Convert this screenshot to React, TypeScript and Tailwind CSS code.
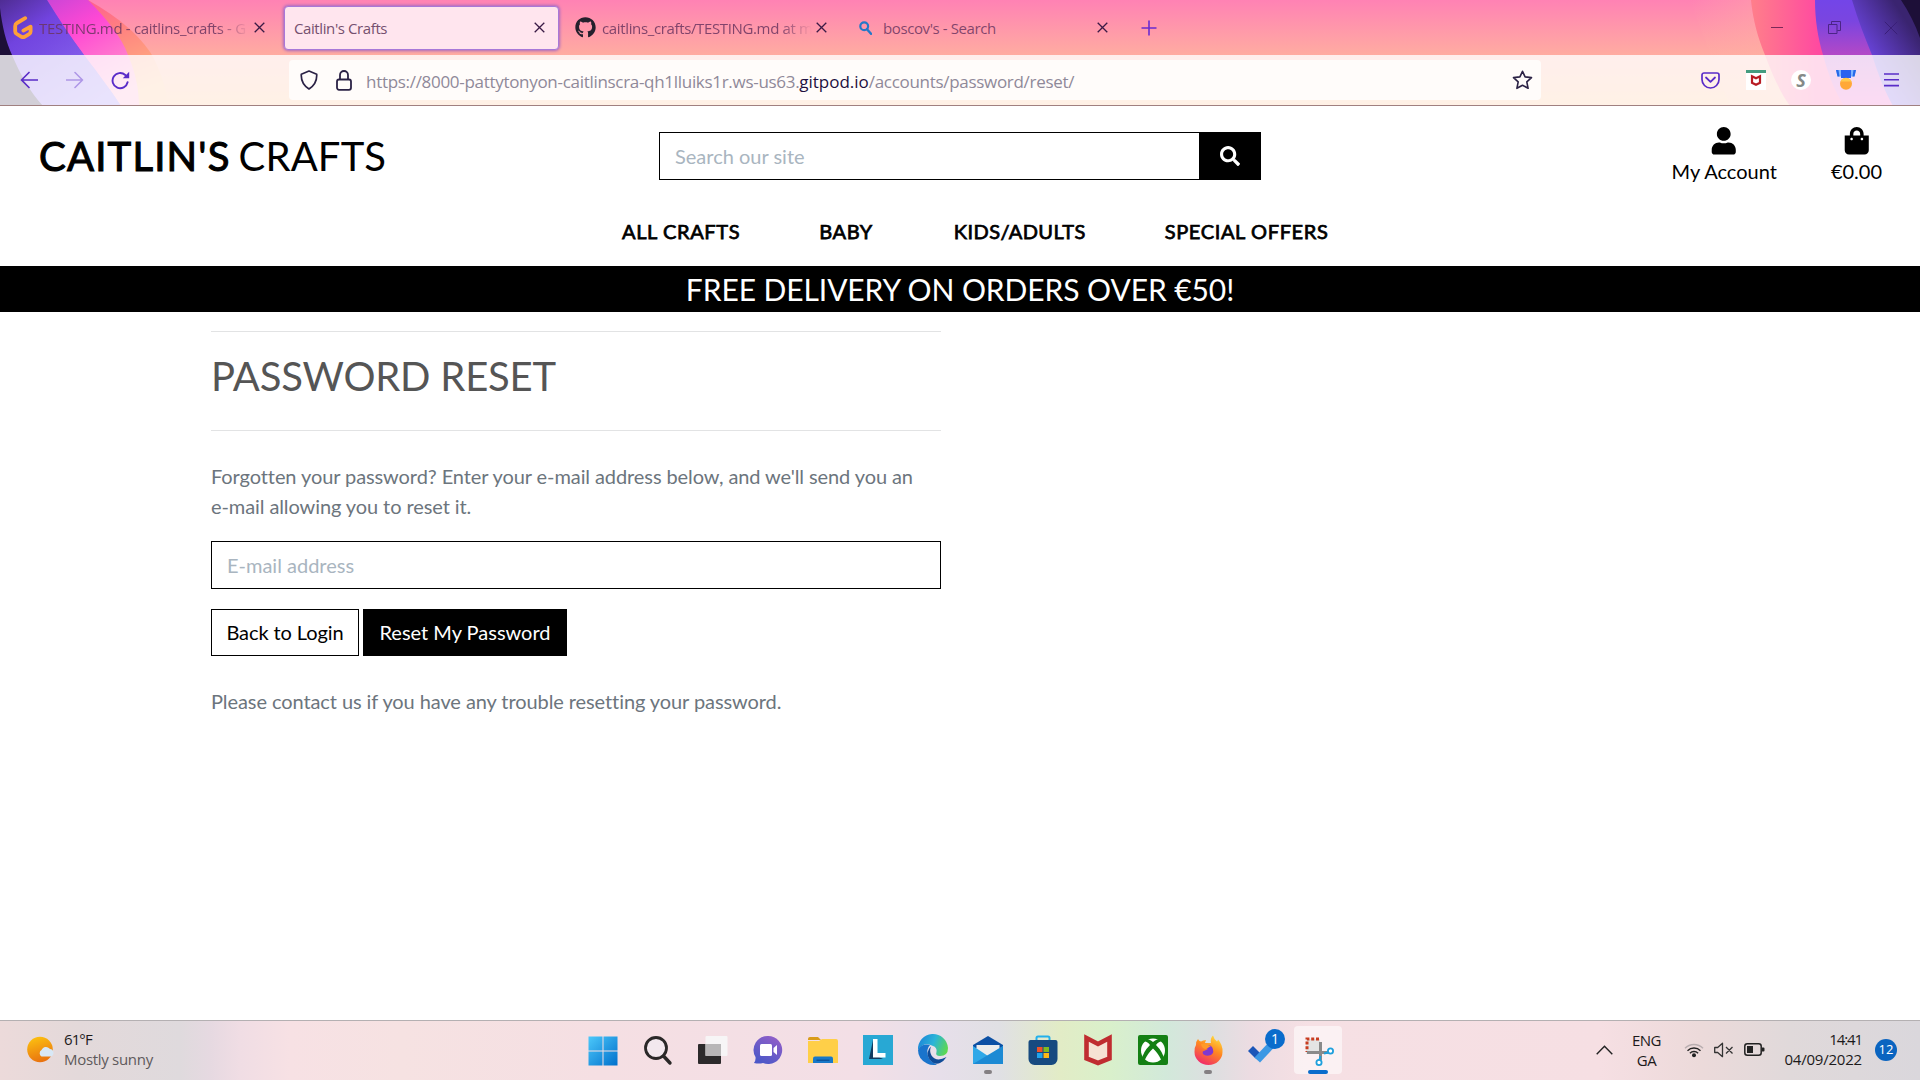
import type { ReactNode } from "react";
import { FaGithub, FaSearch, FaShoppingBag, FaUser } from "react-icons/fa";

function ThemeArt() {
  return (
    <svg className="absolute inset-0" width="1920" height="106" viewBox="0 0 1920 106">
      <defs>
        <linearGradient id="sky" x1="0" y1="0" x2="0" y2="1">
          <stop offset="0" stopColor="#ff82b4" />
          <stop offset="0.52" stopColor="#ffaca1" />
          <stop offset="1" stopColor="#ffba80" />
        </linearGradient>
        <linearGradient id="peach" x1="0" y1="0" x2="0.6" y2="1">
          <stop offset="0" stopColor="#ff3fa0" />
          <stop offset="0.5" stopColor="#ff8080" />
          <stop offset="1" stopColor="#ffb880" />
        </linearGradient>
        <linearGradient id="magenta" x1="0" y1="0" x2="0.7" y2="1">
          <stop offset="0" stopColor="#b043d8" />
          <stop offset="0.45" stopColor="#ff48d4" />
          <stop offset="1" stopColor="#ff9fc8" />
        </linearGradient>
        <linearGradient id="violet" x1="0" y1="0" x2="0.8" y2="1">
          <stop offset="0" stopColor="#3b2277" />
          <stop offset="0.3" stopColor="#6d42dc" />
          <stop offset="1" stopColor="#9a7bf5" />
        </linearGradient>
        <linearGradient id="violetStripe" x1="0" y1="0" x2="0.5" y2="1">
          <stop offset="0" stopColor="#8a4be8" />
          <stop offset="0.5" stopColor="#7846e8" />
          <stop offset="1" stopColor="#7b5cf0" />
        </linearGradient>
        <linearGradient id="rPeach" x1="0" y1="0" x2="1" y2="0">
          <stop offset="0" stopColor="#ff7f8a" />
          <stop offset="0.4" stopColor="#ff4aa0" />
          <stop offset="1" stopColor="#ff4aa0" />
        </linearGradient>
        <linearGradient id="rViolet" x1="0" y1="0" x2="0" y2="1">
          <stop offset="0" stopColor="#7345e8" />
          <stop offset="0.2" stopColor="#7a45e0" />
          <stop offset="0.5" stopColor="#b048c8" />
          <stop offset="1" stopColor="#f04cc0" />
        </linearGradient>
        <linearGradient id="rIndigo" x1="0" y1="1" x2="0.8" y2="0.2">
          <stop offset="0" stopColor="#7f5cff" />
          <stop offset="0.45" stopColor="#6a44dc" />
          <stop offset="1" stopColor="#3a2470" />
        </linearGradient>
        <linearGradient id="fadeIn" x1="0" y1="0" x2="1" y2="0">
          <stop offset="0" stopColor="#ffb0a8" stopOpacity="0" />
          <stop offset="1" stopColor="#ffb0a0" stopOpacity="0.6" />
        </linearGradient>
      </defs>
      <rect width="1920" height="106" fill="url(#sky)" />
      <path d="M0 0H88C120 18 140 36 152 55C162 74 166 90 168 106H0Z" fill="url(#peach)" />
      <path d="M0 0H88C108 20 122 38 128 55C136 74 139 90 139 106H0Z" fill="url(#magenta)" />
      <path d="M0 0H47C58 18 70 36 84 55C100 76 112 92 121 106H0Z" fill="url(#violetStripe)" />
      <path d="M0 0H47C58 18 70 36 84 55C100 76 112 92 121 106H0Z" fill="url(#violet)" opacity="0.75" />
      <path d="M0 8C2 26 6 42 12 55C20 74 30 92 43 106H0Z" fill="#1d0f38" />
      <path d="M1690 0H1751C1753 20 1758 38 1765 55C1772 74 1780 92 1790 106H1730Z" fill="url(#fadeIn)" />
      <path d="M1751 0C1753 20 1758 38 1765 55C1772 74 1780 92 1790 106H1920V0Z" fill="url(#rPeach)" />
      <path d="M1815 0C1815 20 1818 38 1823 55C1828 74 1835 92 1844 106H1920V0Z" fill="url(#rViolet)" />
      <path d="M1852 0C1858 20 1865 38 1872 55C1878 74 1885 92 1893 106H1920V0Z" fill="url(#rIndigo)" />
      <path d="M1901 0C1909 12 1915 24 1920 38V0Z" fill="#1d0f38" />
    </svg>
  );
}

function Close({ className = "" }: { className?: string }) {
  return (
    <svg width="11" height="11" viewBox="0 0 11 11" className={"shrink-0 " + className}>
      <path d="M.7.7l9.6 9.6M10.3.7L.7 10.3" stroke="#3a1a45" strokeWidth="1.3" fill="none" />
    </svg>
  );
}

function TabStrip() {
  return (
    <div className="relative flex h-[55px] items-center text-[15px] tracking-[-0.4px] text-[#6b3560]/85">
      <div className="flex w-[284px] items-center pl-[13px]">
        <svg width="20" height="24" viewBox="0 0 20 24" className="shrink-0">
          <path d="M12.2 2.2L4 7Q2.2 8.1 2.2 10V15.2Q2.2 17 3.8 18L8.5 20.8Q10 21.6 11.5 20.8L16 18.2Q17.6 17.2 17.6 15.4V10.6L10.4 14.6" fill="none" stroke="#ffa038" strokeWidth="3.8" strokeLinecap="round" strokeLinejoin="round" />
        </svg>
        <div className="ml-[6px] w-[210px] whitespace-nowrap pt-px tracking-[-0.32px] [mask-image:linear-gradient(to_right,black_85%,transparent)]">
          TESTING.md - caitlins_crafts - G
        </div>
        <Close className="ml-[5px]" />
      </div>
      <div className="flex h-[44px] w-[275px] items-center justify-between rounded-[4px] border border-[#a878d8] bg-[#ffe5ee] pl-[9px] pr-[13px] text-[#75506f] shadow-[0_0_3px_1px_#a86ac0]">
        <span className="pt-px">Caitlin's Crafts</span>
        <Close />
      </div>
      <div className="flex w-[284px] items-center pl-[16px]">
        <FaGithub size={21} color="#24202c" className="shrink-0" />
        <div className="ml-[6px] w-[210px] whitespace-nowrap pt-px tracking-[-0.36px] [mask-image:linear-gradient(to_right,black_85%,transparent)]">
          caitlins_crafts/TESTING.md at m
        </div>
        <Close className="ml-[4px]" />
      </div>
      <div className="flex w-[265px] items-center pl-[16px]">
        <svg width="13" height="14" viewBox="0 0 13 14" className="shrink-0">
          <circle cx="5.2" cy="5.2" r="3.9" fill="none" stroke="#2478c8" strokeWidth="2.2" />
          <path d="M8 8.2l4 4.6" stroke="#2478c8" strokeWidth="2.4" strokeLinecap="round" />
        </svg>
        <span className="ml-[11px] grow pt-px">boscov's - Search</span>
        <Close />
      </div>
      <svg width="16" height="16" viewBox="0 0 16 16" className="ml-[33px]">
        <path d="M8 .5v15M.5 8h15" stroke="#6a2bd0" strokeWidth="1.6" />
      </svg>
      <div className="ml-auto flex items-center pr-[22px]">
        <svg width="12" height="14" viewBox="0 0 12 14">
          <path d="M0 6.5h12" stroke="#7c2858" strokeWidth="1" />
        </svg>
        <svg width="13" height="13" viewBox="0 0 13 13" className="ml-[45px]">
          <path d="M.5 3.5h8.500v9H.5zM3.500 3.200V.5h9v9H9.300" fill="none" stroke="#4b2486" strokeWidth="1" />
        </svg>
        <svg width="14" height="14" viewBox="0 0 14 14" className="ml-[43px]">
          <path d="M.8.8l12.400 12.400M13.200.8L.8 13.200" stroke="#3a1f78" strokeWidth="1" />
        </svg>
      </div>
    </div>
  );
}

function Toolbar() {
  return (
    <div className="relative flex h-[51px] items-center border-b border-[#a08080] bg-white/80">
      <svg width="18" height="18" viewBox="0 0 18 18" className="ml-[20px]">
        <path d="M17.500 9H1.500M9 1.500L1.500 9L9 16.500" fill="none" stroke="#5a2cc8" strokeWidth="1.700" strokeLinejoin="round" strokeLinecap="round" />
      </svg>
      <svg width="18" height="18" viewBox="0 0 18 18" className="ml-[28px] opacity-40">
        <path d="M.5 9h16M9 1.500L16.500 9L9 16.500" fill="none" stroke="#5a2cc8" strokeWidth="1.600" strokeLinejoin="round" strokeLinecap="round" />
      </svg>
      <svg width="19" height="19" viewBox="0 0 19 19" className="ml-[27px]">
        <path d="M16.600 11.200A7.600 7.600 0 1 1 14.300 4" fill="none" stroke="#5a2cc8" strokeWidth="1.900" strokeLinecap="round" />
        <path d="M18.200.8v6.400h-6.400z" fill="#5a2cc8" />
      </svg>
      <div className="ml-[159px] flex h-[40px] w-[1252px] items-center rounded-[4px] bg-[#fffcfa] pr-[8px]">
        <svg width="18" height="20" viewBox="0 0 18 20" className="ml-[11px]">
          <path d="M9 1L16.700 4.200Q17.300 13.500 9 19Q.7 13.500 1.300 4.200Z" fill="none" stroke="#2b2245" strokeWidth="1.700" strokeLinejoin="round" />
        </svg>
        <svg width="16" height="21" viewBox="0 0 16 21" className="ml-[18px]">
          <rect x="1" y="9.500" width="14" height="10.300" rx="2" fill="none" stroke="#2b2245" strokeWidth="1.800" />
          <path d="M4 9.500V5a4 4 0 0 1 8 0v4.500" fill="none" stroke="#2b2245" strokeWidth="1.800" />
        </svg>
        <span className="ml-[14px] whitespace-pre pt-[3px] text-[17px] text-[#8f8999] tracking-[-0.3px]">
          https://8000-pattytonyon-caitlinscra-qh1lluiks1r.ws-us63.<span className="tracking-[-0.02px] text-[#1d1040]">gitpod.io</span>/accounts/password/reset/
        </span>
        <svg width="21" height="20" viewBox="0 0 21 20" className="ml-auto">
          <path d="M10.500 1.300L13.100 6.900L19.500 7.600L14.800 11.900L16.100 18.300L10.500 15.200L4.900 18.300L6.200 11.900L1.500 7.600L7.900 6.900Z" fill="none" stroke="#2b2245" strokeWidth="1.600" strokeLinejoin="round" />
        </svg>
      </div>
      <svg width="19" height="17" viewBox="0 0 19 17" className="ml-[160px]">
        <path d="M3 1h13a2 2 0 0 1 2 2v4.500a8.500 8.500 0 0 1-17 0V3a2 2 0 0 1 2-2z" fill="none" stroke="#5a2cc8" strokeWidth="1.700" />
        <path d="M5 5.500l4.500 4.300L14 5.500" fill="none" stroke="#5a2cc8" strokeWidth="1.800" strokeLinecap="round" strokeLinejoin="round" />
      </svg>
      <svg width="20" height="20" viewBox="0 0 20 20" className="ml-[26px]">
        <path d="M0 0h20v20H0z" fill="#fff" />
        <path d="M0 0h20v3H0z" fill="#459c80" />
        <path d="M6 6.300l4 2 4-2v6.500l-4 2-4-2z" fill="none" stroke="#b81c24" strokeWidth="2.200" />
      </svg>
      <div className="ml-[25px] flex size-[20px] items-center justify-center rounded-full bg-white text-[18px] leading-[20px] font-bold italic text-[#858a88]">S</div>
      <svg width="20" height="20" viewBox="0 0 20 20" className="ml-[25px]">
        <path d="M0 0h20l-1.500 6.500h-17z" fill="#7db4ff" />
        <path d="M0 0h2.500l1 6.500H1.500zM20 0h-2.500l-1 6.500h2z" fill="#2568e8" />
        <path d="M5 0h10v8H5z" fill="#2a62f0" />
        <circle cx="10" cy="13.700" r="6" fill="#ffa838" />
        <path d="M4.500 11.500a6 6 0 0 1 11 0z" fill="#ffcb50" />
      </svg>
      <svg width="15" height="14" viewBox="0 0 15 14" className="ml-[28px]">
        <path d="M0 1h15M0 6.800h15M0 12.600h15" stroke="#5a2cc8" strokeWidth="1.600" />
      </svg>
    </div>
  );
}

function SiteHeader() {
  return (
    <header className="h-[160px]">
      <div className="flex h-[92px] items-start pl-[39px] pr-[38px]">
        <div className="flex w-[620px] pt-[26px] text-[40px] leading-[48px]">
          <span className="tracking-[1.2px] [-webkit-text-stroke:1.1px_black]">CAITLIN'S</span>
          <span className="ml-[8px] tracking-[0.15px]">CRAFTS</span>
        </div>
        <div className="mt-[26px] flex h-[48px] w-[602px]">
          <div className="w-[540px] border border-r-0 border-black pl-[15px] leading-[47px] text-[#a9b5c0]">Search our site</div>
          <div className="flex w-[62px] items-center justify-center bg-black">
            <FaSearch size={20} color="white" />
          </div>
        </div>
        <div className="ml-auto flex pt-[21px]">
          <div className="flex flex-col items-center">
            <FaUser size={27.5} />
            <span className="mt-[1.500px] leading-[30px]">My Account</span>
          </div>
          <div className="ml-[54px] flex flex-col items-center">
            <FaShoppingBag size={27.5} />
            <span className="mt-[1.500px] leading-[30px]">€0.00</span>
          </div>
        </div>
      </div>
      <nav className="flex gap-[79px] pl-[622px] pt-[18px] leading-[30px] tracking-[0.62px] [-webkit-text-stroke:0.75px_black]">
        <span>ALL CRAFTS</span>
        <span>BABY</span>
        <span className="ml-[2px] tracking-[0.42px]">KIDS/ADULTS</span>
        <span>SPECIAL OFFERS</span>
      </nav>
    </header>
  );
}

function Page() {
  return (
    <main className="h-[914px] bg-white font-['Lato',sans-serif] text-[20px] text-black">
      <SiteHeader />
      <div className="h-[46px] bg-black pt-[5px] text-center text-[30px] leading-[36px] tracking-[-0.08px] text-white">FREE DELIVERY ON ORDERS OVER €50!</div>
      <section className="ml-[211px] w-[730px] text-[#6c757d]">
        <hr className="mt-[19px] border-t border-[#e2e3e4]" />
        <h2 className="mt-[20px] text-[40px] leading-[48px] tracking-[-0.2px] text-[#555]">PASSWORD RESET</h2>
        <hr className="mt-[30px] border-t border-[#e2e3e4]" />
        <p className="mt-[30px] leading-[30px] tracking-[-0.09px]">
          Forgotten your password? Enter your e-mail address below, and we'll send you an
          <br />
          e-mail allowing you to reset it.
        </p>
        <div className="mt-[20px] h-[48px] border border-black pl-[15px] leading-[47px] text-[#a9b5c0]">E-mail address</div>
        <div className="mt-[20px] flex gap-[4px] leading-[45px]">
          <div className="h-[47px] w-[148px] border border-black text-center tracking-[-0.09px] text-black">Back to Login</div>
          <div className="h-[47px] w-[204px] border border-black bg-black text-center text-white">Reset My Password</div>
        </div>
        <p className="mt-[30px] leading-[30px] tracking-[-0.085px]">Please contact us if you have any trouble resetting your password.</p>
      </section>
    </main>
  );
}

const taskIcons: ReactNode[] = [
  <>
    <defs>
      <linearGradient id="win" x1="0" y1="0" x2="1" y2="1">
        <stop offset="0" stopColor="#4cc8fa" />
        <stop offset="1" stopColor="#0070cc" />
      </linearGradient>
    </defs>
    <path d="M.5 1.500h14v14H.5zM15.500 1.500h14v14h-14zM.5 16.500h14v14H.5zM15.500 16.500h14v14h-14z" fill="url(#win)" />
  </>,
  <>
    <circle cx="13" cy="13" r="10.500" fill="#f2e8ee" stroke="#2a2828" strokeWidth="2.800" />
    <path d="M20.500 21l6.500 7" stroke="#2a2828" strokeWidth="3.400" strokeLinecap="round" />
  </>,
  <>
    <rect x="0" y="9" width="23" height="20" rx="1" fill="#2c2a2b" />
    <rect x="7.500" y="1" width="22" height="20" rx="1" fill="#f7f7f7" fillOpacity="0.9" />
    <path d="M7.500 9H23v12H7.500z" fill="#b8b6b7" />
  </>,
  <>
    <defs>
      <linearGradient id="chat" x1="1" y1="0" x2="0.4" y2="1">
        <stop offset="0" stopColor="#9a60c8" />
        <stop offset="1" stopColor="#4d58c8" />
      </linearGradient>
    </defs>
    <path d="M15 1a14 14 0 1 1-5 27q-4 1-9 0q2-3 1.500-6A14 14 0 0 1 15 1z" fill="url(#chat)" />
    <rect x="7" y="9" width="12" height="12" rx="1.500" fill="#fff" />
    <path d="M20.500 13l3.500-3v10l-3.500-3z" fill="#fff" />
  </>,
  <>
    <path d="M0 4a2 2 0 0 1 2-2h8l3 3H0z" fill="#d99c1a" />
    <path d="M0 6h11l3-2h14a2 2 0 0 1 2 2v22H0z" fill="#ffcf48" />
    <path d="M5 28v-4.500a2 2 0 0 1 2-2h16a2 2 0 0 1 2 2V28z" fill="#1878c8" />
    <path d="M8.500 24.500h13v1.500h-13z" fill="#0c549c" />
  </>,
  <>
    <path d="M0 0h30v30H0z" fill="#28a8d4" />
    <path d="M10 5L6 24h14l-8-4z" fill="#123c60" />
    <path d="M10 4h4.500v14h8v4.500H10z" fill="#fff" />
  </>,
  <>
    <defs>
      <linearGradient id="edgeTop" x1="0" y1="0.3" x2="1" y2="0.6">
        <stop offset="0" stopColor="#1c86d8" />
        <stop offset="0.5" stopColor="#2cb4d8" />
        <stop offset="1" stopColor="#5cd850" />
      </linearGradient>
    </defs>
    <path d="M0 15A15 15 0 0 1 30 13q0 8-8 8-5 0-3.500-4a5 5 0 0 0-3.500-6Q6 6 0 15z" fill="url(#edgeTop)" />
    <path d="M0 15q4-7 12-5Q8 14 10 21q2 6 9 8.500Q14 31 9 28.500 0 24 0 15z" fill="#1a74cc" />
    <path d="M13 11.500Q7 17 11.500 24.500q5 6 10.500 3.500 4-2 6.500-6-10 5.500-15-1.500-2.500-4-.5-9z" fill="#104c98" />
  </>,
  <>
    <path d="M0 10L15 1l15 9v3H0z" fill="#0c50a4" />
    <path d="M3.500 10h23v8L15 21 3.500 18z" fill="#ececec" />
    <path d="M0 11l15 10 15-10v18H0z" fill="#2fa8e8" />
    <path d="M0 29l30-18v18z" fill="#1c8ad4" />
  </>,
  <>
    <path d="M8.500 6V3a1.500 1.500 0 0 1 1.500-1.500h10A1.500 1.500 0 0 1 21.500 3v3" fill="none" stroke="#22b0ec" strokeWidth="2" />
    <path d="M.5 7q0-2 2-2h25q2 0 2 2v17a6 6 0 0 1-6 6h-17a6 6 0 0 1-6-6z" fill="#174a80" />
    <path d="M9 12h5.500v5H9z" fill="#f05228" />
    <path d="M15.500 12H21v5h-5.500z" fill="#80ba20" />
    <path d="M9 18h5.500v5H9z" fill="#20a4ec" />
    <path d="M15.500 18H21v5h-5.500z" fill="#fcb818" />
  </>,
  <path d="M3.500 3L15 9l11.500-6v20.500L15 28 3.500 23.500z" fill="#f6e2d4" stroke="#c02c30" strokeWidth="4.600" />,
  <>
    <rect width="30" height="30" rx="2" fill="#148014" />
    <circle cx="15" cy="15.500" r="12" fill="#fff" />
    <path d="M6 3.500q5 0 9 3.500 4-3.500 9-3.500l1.500 3q-4-1-7.500 3.500Q25 17 26 24l-2.500 1.500Q20 18 15 13.500 10 18 6.500 25.500L4 24Q5 17 12 10 8.500 5.500 4.500 6.500z" fill="#148014" />
  </>,
  <>
    <defs>
      <linearGradient id="fox" x1="0.8" y1="0" x2="0.3" y2="1">
        <stop offset="0" stopColor="#ffe040" />
        <stop offset="0.45" stopColor="#ff8a20" />
        <stop offset="1" stopColor="#f0286c" />
      </linearGradient>
    </defs>
    <path d="M3 10q0-4 2-6 1 2 3 2.500 2-1.500 5-1.500l-1 3h6Q17 3 20 .5q1 4 4 6 1-1 1-2Q30 10 29.500 17A14 13 0 0 1 1.500 17Q1 13 3 10z" fill="url(#fox)" />
    <path d="M11 12q5-4 8 0 3 5-1 8-5 2-8-1-1-3 1-3l4-2z" fill="#8038d0" />
    <path d="M8 9q4-1 7 1l3 1-5 3q-4 0-5-5z" fill="#ff9a28" />
  </>,
  <>
    <path d="M0 16l5-5 7.500 7.500-5 5z" fill="#1c56b8" />
    <path d="M6.500 22.500L22 6l5.500 5L12 27.500z" fill="#3c98e4" />
  </>,
  <>
    <rect x="3" y="4" width="14" height="15" fill="#e4e4e4" />
    <path d="M16 4H4v13" fill="none" stroke="#c83c20" strokeWidth="3" strokeDasharray="3 1.800" />
    <path d="M17.500 7v18M4 17.500h21" stroke="#8a8a8a" strokeWidth="3" fill="none" />
    <circle cx="27.500" cy="16" r="2.600" fill="#fff" stroke="#20a0dc" strokeWidth="1.800" />
    <circle cx="16" cy="27.500" r="2.600" fill="#fff" stroke="#20a0dc" strokeWidth="1.800" />
    <path d="M21 18.500l4-1M17.500 21l-1 4" stroke="#20a0dc" strokeWidth="2" />
  </>,
];

function Taskbar() {
  return (
    <footer className="flex h-[60px] items-center border-t border-[#b4b0b2] bg-[linear-gradient(to_right,#ecdada_0px,#e3d9da_80px,#dfdadd_180px,#e6d9e1_210px,#f0dde4_240px,#f7e1e4_290px,#f6e2e2_400px,#f5dfe3_600px,#f3dfe6_860px,#e7dfea_940px,#e0e0e4_1000px,#e2ecc6_1060px,#d9f0cb_1110px,#d2e9da_1165px,#dcdfe0_1210px,#ecdce2_1250px,#f6e0e4_1310px,#f6dfe3_1600px,#ecdada_1700px,#e0d9da_1790px,#dad7dc_1920px)] pb-[2px] text-[15px] leading-[20px] text-[#1c1a1b]">
      <div className="flex w-[575px] items-center pl-[27px]">
        <svg width="28" height="27" viewBox="0 0 28 27">
          <defs>
            <linearGradient id="sun" x1="0.3" y1="0" x2="0.6" y2="1">
              <stop offset="0" stopColor="#fcc010" />
              <stop offset="1" stopColor="#e87010" />
            </linearGradient>
          </defs>
          <circle cx="13" cy="13.500" r="12.800" fill="url(#sun)" />
          <path d="M14.500 20.500a3.800 3.800 0 0 1 0-6.500 5 5 0 0 1 8.500-1 3.900 3.900 0 0 1 1 7.500z" fill="#d8e8f6" />
        </svg>
        <div className="ml-[9px] pb-px tracking-[-0.3px]">
          <div className="tracking-[-0.9px]">61°F</div>
          <div className="text-[#5e595b]">Mostly sunny</div>
        </div>
      </div>
      {taskIcons.map((icon, i) => (
        <div key={i} className={i === 13 ? "relative mr-[3.500px] ml-[4px] flex h-[48px] w-[48px] items-center justify-center rounded-[4px] bg-white/55" : "relative flex h-[48px] w-[55px] items-center justify-center"}>
          <svg width="30" height="30" viewBox="0 0 30 30" className="overflow-visible">
            {icon}
          </svg>
          {(i === 7 || i === 11) && <i className="absolute bottom-0 h-[4px] w-[8px] rounded-full bg-[#848083]" />}
          {i === 13 && <i className="absolute bottom-0 h-[4px] w-[20px] rounded-full bg-[#0a6ccc]" />}
          {i === 12 && <b className="absolute top-[3px] left-[30px] size-[20px] rounded-full bg-[#0a6ccc] text-center text-[14px] font-normal text-white">1</b>}
        </div>
      ))}
      <svg width="17" height="10" viewBox="0 0 17 10" className="ml-[250px]">
        <path d="M.7 9.300L8.500 1.200l7.800 8.100" fill="none" stroke="#222" strokeWidth="1.400" />
      </svg>
      <div className="ml-[19px] w-[30px] text-center tracking-[-0.5px]">
        <div>ENG</div>
        <div>GA</div>
      </div>
      <svg width="20" height="16" viewBox="0 0 20 16" className="ml-[22px]">
        <g fill="none" stroke="#222" strokeWidth="1.400">
          <path d="M1 6.200a12.700 12.700 0 0 1 18 0" stroke="#b9aeb0" />
          <path d="M3.500 8.700a9.200 9.200 0 0 1 13 0M5.900 11.200a5.800 5.800 0 0 1 8.200 0" />
        </g>
        <circle cx="10" cy="13.300" r="2" fill="#222" />
      </svg>
      <svg width="20" height="16" viewBox="0 0 20 16" className="ml-[10px]">
        <path d="M.7 5.500h3L8.500 1.300v13.400L3.700 10.500h-3zM12 5l6.500 6.500M18.500 5L12 11.500" fill="none" stroke="#333" strokeWidth="1.300" strokeLinejoin="round" />
      </svg>
      <svg width="21" height="13" viewBox="0 0 21 13" className="ml-[10px]">
        <rect x=".8" y=".8" width="16.400" height="11.400" rx="2.500" fill="none" stroke="#222" strokeWidth="1.500" />
        <path d="M3 3h6v7H3zM18 4.500h1.500a1 1 0 0 1 1 1v2a1 1 0 0 1-1 1H18z" fill="#222" />
      </svg>
      <div className="ml-auto pb-px text-right tracking-[-0.2px]">
        <div className="tracking-[-1.100px]">14:41</div>
        <div>04/09/2022</div>
      </div>
      <div className="mr-[23px] ml-[13px] size-[22px] rounded-full bg-[#0a64c0] text-center text-[13px] leading-[21px] text-white">12</div>
    </footer>
  );
}

export default function App() {
  return (
    <div className="flex h-[1080px] w-[1920px] flex-col overflow-hidden bg-white font-['Open_Sans',sans-serif]">
      <div className="relative h-[106px] shrink-0">
        <ThemeArt />
        <TabStrip />
        <Toolbar />
      </div>
      <Page />
      <Taskbar />
    </div>
  );
}
